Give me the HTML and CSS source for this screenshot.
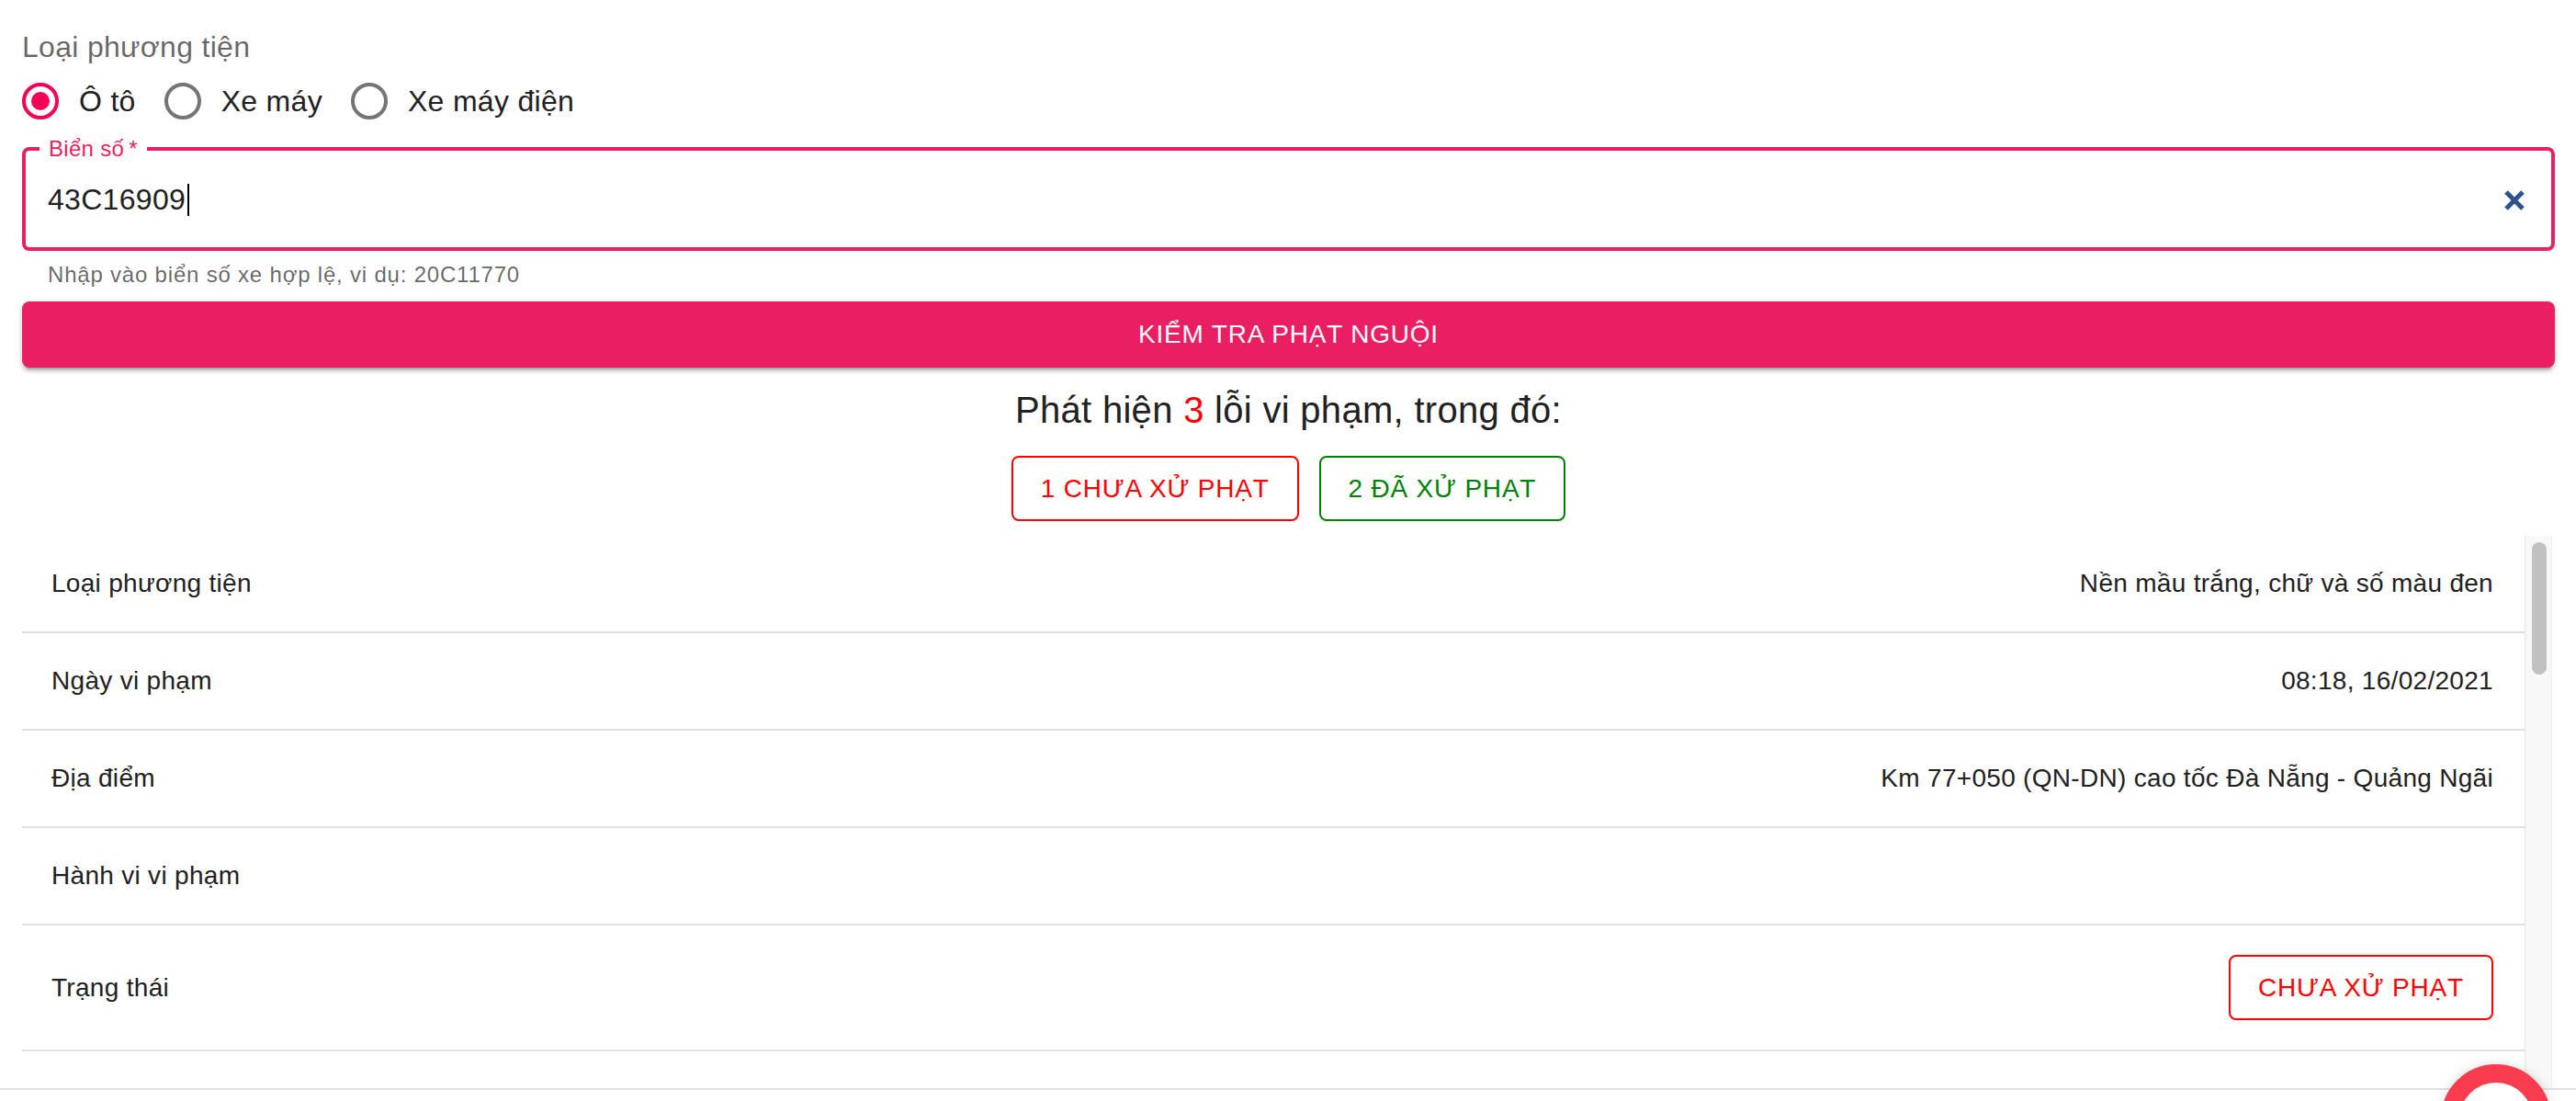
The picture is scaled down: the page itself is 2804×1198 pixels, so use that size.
FILE: index.html
```html
<!DOCTYPE html>
<html lang="vi">
<head>
    <meta charset="UTF-8">
    <meta name="viewport" content="width=device-width, initial-scale=1.0">
    <title>Kiểm tra phạt nguội</title>
    <link rel="stylesheet" href="styles.css">
</head>
<body>
    <main class="page">
        <div class="form-label">Loại phương tiện</div>
        <div class="radio-group">
            <label class="radio-option"><span class="radio checked"></span>Ô tô</label>
            <label class="radio-option"><span class="radio"></span>Xe máy</label>
            <label class="radio-option"><span class="radio"></span>Xe máy điện</label>
        </div>

        <fieldset class="plate-field">
            <legend>Biển số&thinsp;*</legend>
            <div class="field-row">
                <div class="plate-value">43C16909<span class="caret"></span></div>
                <svg class="clear-icon" viewBox="0 0 24 24" aria-label="Xoá">
                    <path d="M6 6 18 18M18 6 6 18"/>
                </svg>
            </div>
        </fieldset>
        <p class="helper">Nhập vào biển số xe hợp lệ, vi dụ: 20C11770</p>

        <button class="check-btn">KIỂM TRA PHẠT NGUỘI</button>

        <h2 class="summary">Phát hiện <span class="count">3</span> lỗi vi phạm, trong đó:</h2>
        <div class="summary-actions">
            <button class="outline-btn red">1 CHƯA XỬ PHẠT</button>
            <button class="outline-btn green">2 ĐÃ XỬ PHẠT</button>
        </div>

        <div class="result-wrap">
            <div class="result-table">
                <!-- violation 1 -->
                <div class="row"><span>Loại phương tiện</span><span>Nền mầu trắng, chữ và số màu đen</span></div>
                <div class="row"><span>Ngày vi phạm</span><span>08:18, 16/02/2021</span></div>
                <div class="row"><span>Địa điểm</span><span>Km 77+050 (QN-DN) cao tốc Đà Nẵng - Quảng Ngãi</span></div>
                <div class="row"><span>Hành vi vi phạm</span><span></span></div>
                <div class="row"><span>Trạng thái</span><button class="outline-btn red">CHƯA XỬ PHẠT</button></div>
                <div class="row"><span>Đơn vị phát hiện vi phạm</span><span>Cục Cảnh sát giao thông</span></div>
                <div class="row"><span>Nơi giải quyết vụ việc</span><span>Đội Cảnh sát giao thông đường bộ cao tốc số 5</span></div>

                <!-- violation 2 -->
                <div class="row"><span>Loại phương tiện</span><span>Nền mầu trắng, chữ và số màu đen</span></div>
                <div class="row"><span>Ngày vi phạm</span><span>14:02, 03/11/2020</span></div>
                <div class="row"><span>Địa điểm</span><span>Km 12+300 (ĐN-QN) cao tốc Đà Nẵng - Quảng Ngãi</span></div>
                <div class="row"><span>Hành vi vi phạm</span><span></span></div>
                <div class="row"><span>Trạng thái</span><button class="outline-btn green">ĐÃ XỬ PHẠT</button></div>
                <div class="row"><span>Đơn vị phát hiện vi phạm</span><span>Cục Cảnh sát giao thông</span></div>
                <div class="row"><span>Nơi giải quyết vụ việc</span><span>Đội Cảnh sát giao thông đường bộ cao tốc số 5</span></div>

                <!-- violation 3 -->
                <div class="row"><span>Loại phương tiện</span><span>Nền mầu trắng, chữ và số màu đen</span></div>
                <div class="row"><span>Ngày vi phạm</span><span>09:45, 21/07/2020</span></div>
                <div class="row"><span>Địa điểm</span><span>Km 45+800 (QN-DN) cao tốc Đà Nẵng - Quảng Ngãi</span></div>
                <div class="row"><span>Hành vi vi phạm</span><span></span></div>
                <div class="row"><span>Trạng thái</span><button class="outline-btn green">ĐÃ XỬ PHẠT</button></div>
                <div class="row"><span>Đơn vị phát hiện vi phạm</span><span>Cục Cảnh sát giao thông</span></div>
            </div>
            <div class="scroll-track"><div class="scroll-thumb"></div></div>
        </div>
    </main>

    <div class="bottom-bar"></div>
    <div class="chat-bubble"></div>
</body>
</html>
```

FILE: styles.css
```css
* {
    margin: 0;
    padding: 0;
    box-sizing: border-box;
}

body {
    font-family: 'Liberation Sans', Arial, sans-serif;
    color: #212121;
    background: #fff;
    overflow: hidden;
}

.page {
    padding: 28px 23px 0 24px;
}

.form-label {
    font-size: 32px;
    line-height: 46px;
    color: rgba(0, 0, 0, 0.6);
    letter-spacing: 0.3px;
}

/* vehicle type radios */
.radio-group {
    display: flex;
    align-items: center;
    height: 72px;
}

.radio-option {
    display: flex;
    align-items: center;
    font-size: 32px;
    letter-spacing: 0.3px;
    margin-right: 31px;
    cursor: pointer;
}

.radio {
    width: 40px;
    height: 40px;
    border: 4px solid #757575;
    border-radius: 50%;
    margin-right: 22px;
    display: flex;
    align-items: center;
    justify-content: center;
}

.radio.checked {
    border-color: #f50057;
}

.radio.checked::after {
    content: '';
    width: 20px;
    height: 20px;
    border-radius: 50%;
    background: #f50057;
}

/* plate number field */
.plate-field {
    margin-top: 4px;
    border: 4px solid #e91e63;
    border-radius: 8px;
    padding: 0;
    min-width: 0;
}

.plate-field legend {
    font-size: 24px;
    line-height: 24px;
    color: #e91e63;
    padding: 0 10px;
    margin-left: 15px;
    letter-spacing: 0.3px;
}

.field-row {
    display: flex;
    align-items: center;
    padding: 20px 22px 29px 24px;
}

.plate-value {
    flex: 1;
    font-size: 32px;
    line-height: 46px;
    height: 46px;
    letter-spacing: 0.3px;
    display: flex;
    align-items: center;
}

.caret {
    width: 2px;
    height: 35px;
    background: #000;
    margin-left: 2px;
}

.clear-icon {
    width: 36px;
    height: 36px;
    fill: none;
    stroke: #30528c;
    stroke-width: 3.4;
    margin-top: 2px;
}

.helper {
    margin: 6px 0 0 28px;
    font-size: 24px;
    line-height: 40px;
    letter-spacing: 0.8px;
    color: rgba(0, 0, 0, 0.6);
}

.check-btn {
    display: block;
    width: 100%;
    height: 72px;
    margin-top: 9px;
    border: none;
    border-radius: 8px;
    background: #e91e63;
    color: #fff;
    font-family: inherit;
    font-size: 28px;
    letter-spacing: 0.8px;
    cursor: pointer;
    box-shadow: 0 6px 2px -4px rgba(0, 0, 0, 0.2), 0 4px 4px 0 rgba(0, 0, 0, 0.14), 0 2px 10px 0 rgba(0, 0, 0, 0.12);
}

/* summary */
.summary {
    margin-top: 14px;
    font-size: 40px;
    line-height: 64px;
    font-weight: normal;
    text-align: center;
    letter-spacing: 0.3px;
}

.count {
    color: #ff0000;
}

.summary-actions {
    display: flex;
    justify-content: center;
    gap: 22px;
    margin-top: 18px;
}

.outline-btn {
    height: 71px;
    padding: 0 30px;
    background: #fff;
    border: 2px solid;
    border-radius: 8px;
    font-family: inherit;
    font-size: 28px;
    letter-spacing: 0.8px;
    cursor: pointer;
}

.outline-btn.red {
    color: #ff0000;
    border-color: #ff0000;
}

.outline-btn.green {
    color: #008000;
    border-color: #008000;
}

/* result table with its scrollbar */
.result-wrap {
    display: flex;
    height: 601px;
    margin: 16px 3px 0 0;
}

.result-table {
    flex: 1;
    overflow: hidden;
}

.scroll-track {
    width: 30px;
    background: #f8f8f8;
    border-left: 1px solid #e6e6e6;
    border-right: 1px solid #ececec;
    padding: 7px 5px 0 7px;
}

.scroll-thumb {
    height: 144px;
    background: #c1c1c1;
    border-radius: 8px;
}

.row {
    display: flex;
    justify-content: space-between;
    align-items: center;
    min-height: 106px;
    padding: 32px 34px 32px 32px;
    border-bottom: 2px solid #e0e0e0;
    font-size: 28px;
    line-height: 40px;
    letter-spacing: 0.3px;
}

.bottom-bar {
    height: 14px;
    border-top: 2px solid #e0e0e0;
}

.chat-bubble {
    position: fixed;
    left: 2657px;
    top: 1158px;
    width: 120px;
    height: 120px;
    border: 20px solid #fa3d4e;
    border-radius: 50%;
    background: #fff;
    box-shadow: 0 0 12px rgba(0, 0, 0, 0.15);
}
```
